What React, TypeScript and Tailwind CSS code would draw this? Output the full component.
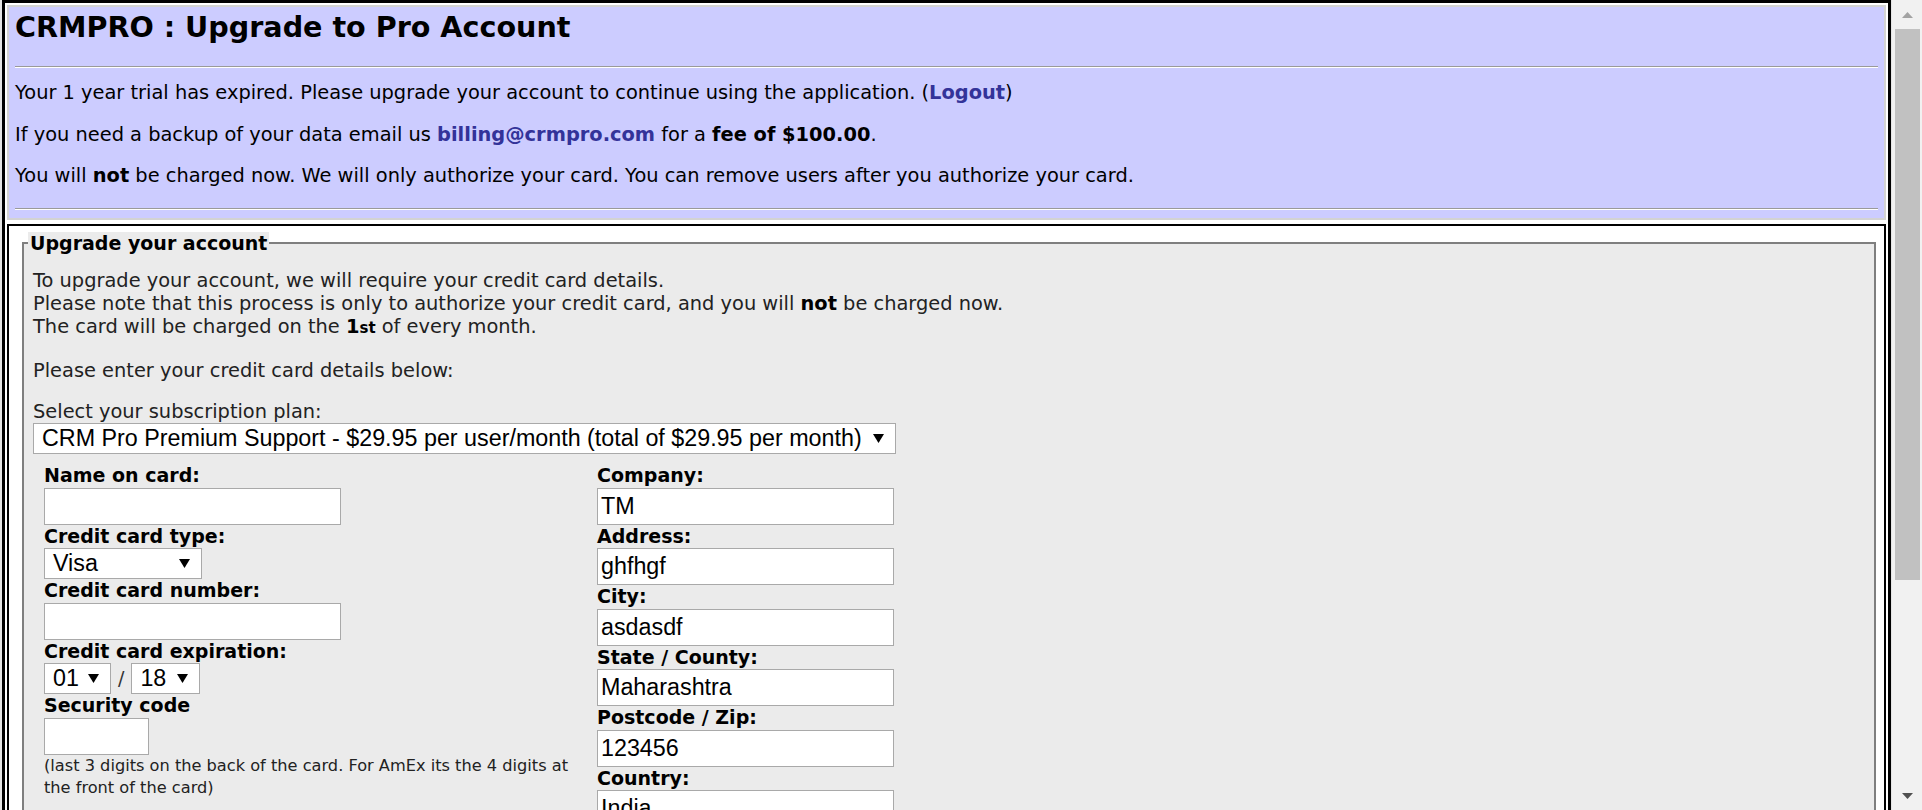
import React from 'react';

const Label = ({ children }: { children: React.ReactNode }) => (
  <div className="h-[23.5px] leading-[23.5px] font-bold text-[19px] whitespace-nowrap">{children}</div>
);

const TextBox = ({ value = '', width }: { value?: string; width: string }) => (
  <div
    className={`${width} h-[37px] flex items-center bg-white border border-[#a9a9a9] pl-[3px] font-['Liberation_Sans',Arial,sans-serif] text-[23.3px] text-black overflow-hidden whitespace-nowrap`}
  >
    {value}
  </div>
);

const Arrow = () => (
  <svg width="11" height="9" viewBox="0 0 11 9" className="shrink-0">
    <polygon points="0,0 11,0 5.5,9" fill="#000" />
  </svg>
);

const DropDown = ({ value, width }: { value: string; width: string }) => (
  <div
    className={`${width} h-[31px] flex items-center bg-white border border-[#a9a9a9] pl-[8px] pr-[11px] font-['Liberation_Sans',Arial,sans-serif] text-[23.3px] text-black whitespace-nowrap`}
  >
    <span className="flex-1">{value}</span>
    <Arrow />
  </div>
);

export default function App() {
  return (
    <div className="flex h-[810px] w-full overflow-hidden bg-[#e4e4e4] text-black font-['DejaVu_Sans',Verdana,sans-serif]">
      <div className="flex-1 min-w-0 pl-[2px] pr-[1px]">
        <div className="border-[3px] border-black bg-white p-[2px]">
          {/* header */}
          <div className="border-2 border-[#d3d3d3] bg-[#ccccff] px-[6px] pb-[8px]">
            <h2 className="h-[59px] pt-[3px] text-[28.6px] leading-[34px] font-bold">CRMPRO : Upgrade to Pro Account</h2>
            <div className="border-t border-b border-t-[#9a9a9a] border-b-white" />
            <p className="mt-[13px] text-[19.4px] leading-[23px]">
              Your 1 year trial has expired. Please upgrade your account to continue using the application. (
              <a className="font-bold text-[#333399]">Logout</a>)
            </p>
            <p className="mt-[19px] text-[19.4px] leading-[23px]">
              If you need a backup of your data email us <a className="font-bold text-[#333399]">billing@crmpro.com</a> for a{' '}
              <b>fee of $100.00</b>.
            </p>
            <p className="mt-[18px] text-[19.4px] leading-[23px]">
              You will <b>not</b> be charged now. We will only authorize your card. You can remove users after you authorize
              your card.
            </p>
            <div className="mt-[21px] border-t border-b border-t-[#9a9a9a] border-b-white" />
          </div>

          {/* form cell */}
          <div className="mt-[4px] border-2 border-black bg-white pl-[13px] pr-[8px] pt-[6px]">
            <fieldset className="border-2 border-[#7f7f7f] bg-[#ebebeb] pl-[9px] pr-[9px] pt-[15px] pb-[20px] text-[19.4px] leading-[23px] text-[#222]">
              <legend className="-ml-[5px] px-[2px] bg-[#ebebeb] font-bold text-[19px] text-black leading-[22px]">
                Upgrade your account
              </legend>
              <div>To upgrade your account, we will require your credit card details.</div>
              <div>
                Please note that this process is only to authorize your credit card, and you will <b className="text-black">not</b> be
                charged now.
              </div>
              <div>
                The card will be charged on the <b className="text-black">1<span className="text-[15px]">st</span></b> of every month.
              </div>
              <p className="mt-[19px]">Please enter your credit card details below:</p>
              <p className="mt-[18px]">Select your subscription plan:</p>
              <DropDown value="CRM Pro Premium Support - $29.95 per user/month (total of $29.95 per month)" width="w-[863px]" />

              <div className="mt-[10px] pl-[11px] flex text-black">
                <div className="w-[553px] shrink-0">
                  <Label>Name on card:</Label>
                  <TextBox width="w-[297px]" />
                  <Label>Credit card type:</Label>
                  <DropDown value="Visa" width="w-[158px]" />
                  <Label>Credit card number:</Label>
                  <TextBox width="w-[297px]" />
                  <Label>Credit card expiration:</Label>
                  <div className="flex items-center">
                    <DropDown value="01" width="w-[67px]" />
                    <span className="mx-[7px] text-[19px] text-[#333]">/</span>
                    <DropDown value="18" width="w-[69px]" />
                  </div>
                  <Label>Security code</Label>
                  <TextBox width="w-[105px]" />
                  <div className="text-[16.2px] leading-[22px] text-[#222] pr-[8px]">
                    (last 3 digits on the back of the card. For AmEx its the 4 digits at the front of the card)
                  </div>
                </div>
                <div className="w-[297px] shrink-0">
                  <Label>Company:</Label>
                  <TextBox value="TM" width="w-[297px]" />
                  <Label>Address:</Label>
                  <TextBox value="ghfhgf" width="w-[297px]" />
                  <Label>City:</Label>
                  <TextBox value="asdasdf" width="w-[297px]" />
                  <Label>State / County:</Label>
                  <TextBox value="Maharashtra" width="w-[297px]" />
                  <Label>Postcode / Zip:</Label>
                  <TextBox value="123456" width="w-[297px]" />
                  <Label>Country:</Label>
                  <TextBox value="India" width="w-[297px]" />
                  <Label>Phone:</Label>
                  <TextBox width="w-[297px]" />
                </div>
              </div>
            </fieldset>
          </div>
        </div>
      </div>

      {/* scrollbar */}
      <div className="w-[30px] shrink-0 bg-[#f1f1f1] flex flex-col">
        <div className="h-[29px] flex items-center justify-center pl-[1px]">
          <svg width="11" height="6" viewBox="0 0 11 6">
            <polygon points="5.5,0 11,6 0,6" fill="#a3a3a3" />
          </svg>
        </div>
        <div className="h-[551px] ml-[3px] mr-[2px] bg-[#c1c1c1]" />
        <div className="flex-1" />
        <div className="h-[29px] flex items-center justify-center pl-[1px]">
          <svg width="11" height="6" viewBox="0 0 11 6">
            <polygon points="0,0 11,0 5.5,6" fill="#505050" />
          </svg>
        </div>
      </div>
    </div>
  );
}
